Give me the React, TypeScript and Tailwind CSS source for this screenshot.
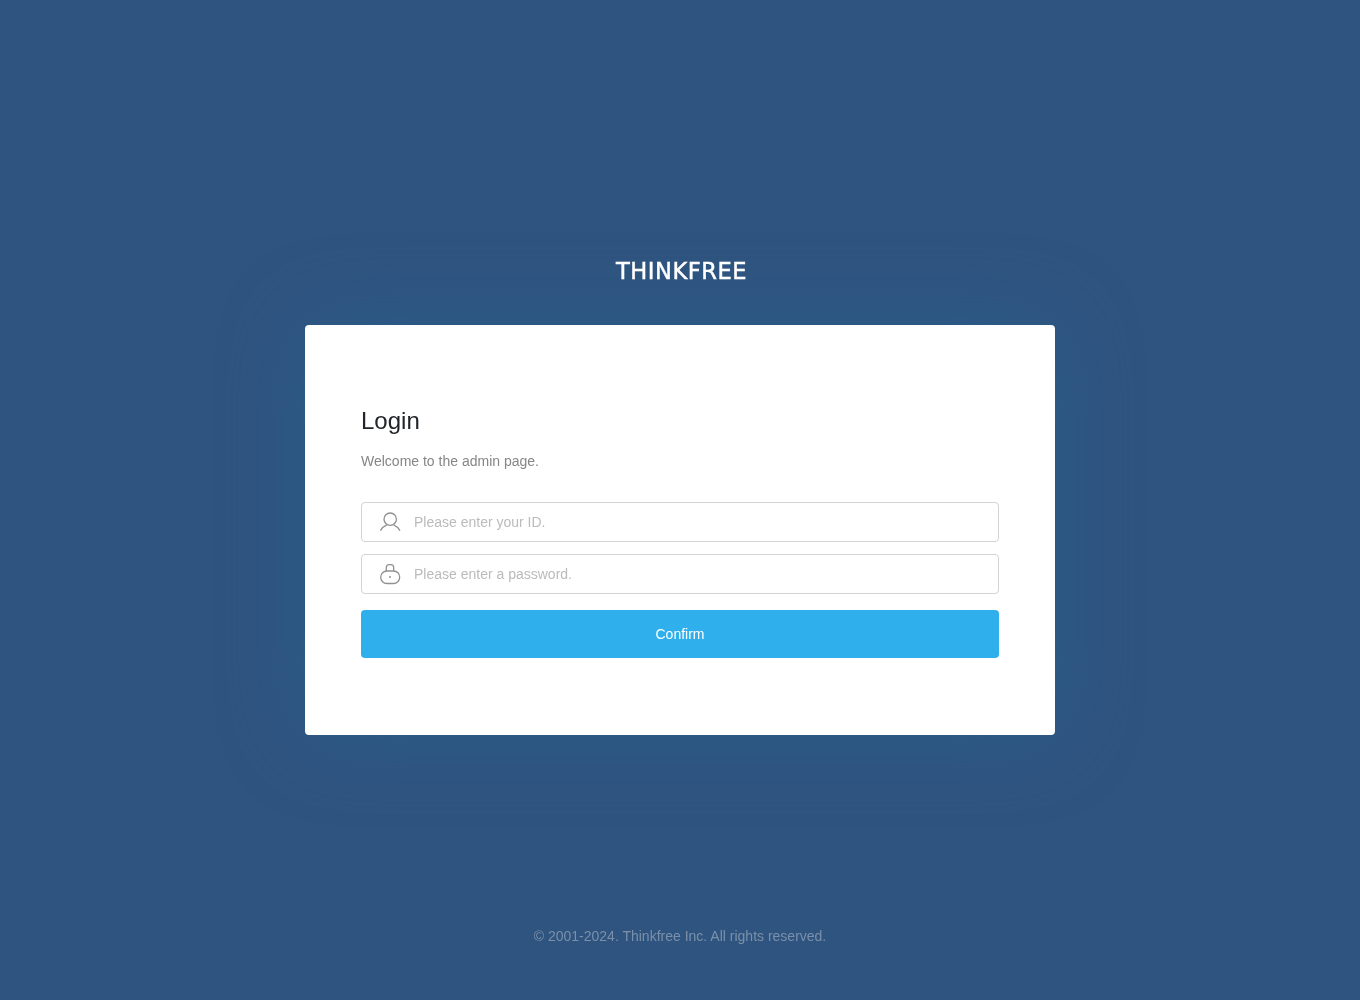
export default function App() {
  return (
    <div className="min-h-[1000px] bg-[#2f547f] flex flex-col items-center font-['Liberation_Sans',Arial,sans-serif] will-change-transform">
      <div className="mt-[258px] h-[26px] flex items-center justify-center font-['DejaVu_Sans',sans-serif] font-normal text-[22.6px] leading-none tracking-[0.5px] [-webkit-text-stroke:0.45px_white] text-white translate-x-[1.5px]">
        THINKFREE
      </div>
      <main className="mt-[41px] w-[750px] h-[410px] bg-white rounded-[4px] shadow-[0_0_84px_rgba(41,110,160,0.35)] px-14 pt-[80px]">
        <h1 className="text-2xl leading-8 text-[#212529]">Login</h1>
        <p className="mt-[12px] text-sm leading-[24px] text-[#868686]">Welcome to the admin page.</p>
        <form className="mt-[29px]">
          <div className="h-10 flex items-center border border-[#d4d4d4] rounded-[4px]">
            <svg className="ml-[17px] w-[22px] h-[22px] shrink-0" viewBox="0 0 22 22" fill="none" stroke="#919191" strokeWidth="1.3">
              <circle cx="11.2" cy="8.2" r="6.2" />
              <path d="M1.4 19.6c1.6-2.9 3.6-4.6 6.4-5.8M21 19.6c-1.6-2.9-3.6-4.6-6.4-5.8" />
            </svg>
            <input className="ml-[13px] flex-1 text-sm text-[#333] outline-none placeholder:text-[#bbbbbb]" placeholder="Please enter your ID." />
          </div>
          <div className="mt-3 h-10 flex items-center border border-[#d4d4d4] rounded-[4px]">
            <svg className="ml-[17px] w-[22px] h-[22px] shrink-0" viewBox="0 0 22 22" fill="none" stroke="#919191" strokeWidth="1.3">
              <path d="M7.3 8V4.6a2.9 2.9 0 0 1 2.9-2.9h1.6a2.9 2.9 0 0 1 2.9 2.9V8" />
              <rect x="1.7" y="8" width="19" height="12.5" rx="6.2" />
              <circle cx="11" cy="14" r="1" fill="#919191" stroke="none" />
            </svg>
            <input type="password" className="ml-[13px] flex-1 text-sm text-[#333] outline-none placeholder:text-[#bbbbbb]" placeholder="Please enter a password." />
          </div>
          <button type="button" className="mt-4 w-full h-12 bg-[#2fb0ed] rounded-[4px] text-sm text-white">Confirm</button>
        </form>
      </main>
      <footer className="mt-[191px] text-sm leading-5 text-[#7a90aa]">© 2001-2024. Thinkfree Inc. All rights reserved.</footer>
    </div>
  );
}
